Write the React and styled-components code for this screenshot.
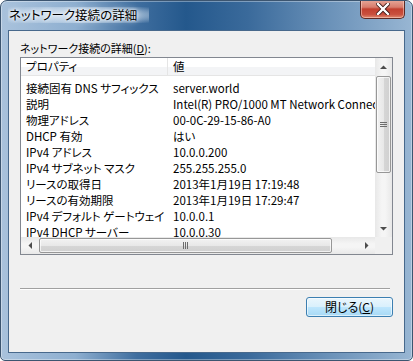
import styled, { createGlobalStyle } from 'styled-components';

const GlobalStyle = createGlobalStyle`
	html, body {
		margin: 0;
		padding: 0;
		background: #fff;
	}
	body {
		font-family: 'Noto Sans CJK JP', 'Liberation Sans', sans-serif;
		font-size: 11.5px;
		font-feature-settings: 'palt';
		color: #000;
	}
`;

const rows = [
	['接続固有 DNS サフィックス', 'server.world'],
	['説明', 'Intel(R) PRO/1000 MT Network Connection'],
	['物理アドレス', '00-0C-29-15-86-A0'],
	['DHCP 有効', 'はい'],
	['IPv4 アドレス', '10.0.0.200'],
	['IPv4 サブネット マスク', '255.255.255.0'],
	['リースの取得日', '2013年1月19日 17:19:48'],
	['リースの有効期限', '2013年1月19日 17:29:47'],
	['IPv4 デフォルト ゲートウェイ', '10.0.0.1'],
	['IPv4 DHCP サーバー', '10.0.0.30'],
];

const Arrow = ({ dir }) => {
	const pts = {
		up: '0,4 7,4 3.5,0.5',
		down: '0,0 7,0 3.5,3.5',
		left: '4,0 4,7 0.5,3.5',
		right: '0,0 0,7 3.5,3.5',
	}[dir];
	const vertical = dir === 'up' || dir === 'down';
	return (
		<svg width={vertical ? 7 : 4} height={vertical ? 4 : 7}>
			<polygon points={pts} fill='#4d4d4d' />
		</svg>
	);
};

const App = () => {
	return (
		<>
			<GlobalStyle />
			<Window>
				<TitleBar>
					<Title>ネットワーク接続の詳細</Title>
					<CloseButton>
						<svg width='14' height='12' viewBox='0 0 14 12'>
							<path
								d='M2 1 L12 11 M12 1 L2 11'
								stroke='#3a1410'
								strokeWidth='4'
								strokeLinecap='square'
							/>
							<path
								d='M2 1 L12 11 M12 1 L2 11'
								stroke='#fff'
								strokeWidth='2.4'
								strokeLinecap='square'
							/>
						</svg>
					</CloseButton>
				</TitleBar>
				<Client>
					<Label>
						ネットワーク接続の詳細(<u>D</u>):
					</Label>
					<ListBox>
						<ListArea>
							<Header>
								<HeaderCell $width={147}>プロパティ</HeaderCell>
								<HeaderCell>値</HeaderCell>
							</Header>
							<Rows>
								{rows.map(([name, value]) => (
									<Row key={name}>
										<Cell $width={147}>{name}</Cell>
										<Cell>{value}</Cell>
									</Row>
								))}
							</Rows>
						</ListArea>
						<VScroll>
							<ArrowBox $size={17}>
								<Arrow dir='up' />
							</ArrowBox>
							<VTrack>
								<VThumb>
									<svg width='7' height='7'>
										<path
											d='M0 1.5 H7 M0 3.5 H7 M0 5.5 H7'
											stroke='#6d6d6d'
											strokeWidth='1'
										/>
									</svg>
								</VThumb>
							</VTrack>
							<ArrowBox $size={17}>
								<Arrow dir='down' />
							</ArrowBox>
						</VScroll>
						<HScroll>
							<ArrowBox $size={17}>
								<Arrow dir='left' />
							</ArrowBox>
							<HTrack>
								<HThumb>
									<svg width='7' height='7'>
										<path
											d='M1.5 0 V7 M3.5 0 V7 M5.5 0 V7'
											stroke='#6d6d6d'
											strokeWidth='1'
										/>
									</svg>
								</HThumb>
							</HTrack>
							<ArrowBox $size={17}>
								<Arrow dir='right' />
							</ArrowBox>
						</HScroll>
						<Corner />
					</ListBox>
					<Separator />
					<ButtonRow>
						<Button>
							閉じる(<u>C</u>)
						</Button>
					</ButtonRow>
				</Client>
			</Window>
		</>
	);
};

const Window = styled.div`
	width: 413px;
	height: 361px;
	box-sizing: border-box;
	border: 1px solid #3c5570;
	border-radius: 7px 7px 5px 5px;
	background: linear-gradient(
		to right,
		#a9c2dc 0%,
		#8eafd0 18%,
		#3f6e9f 33%,
		#24588c 45%,
		#3a6a9b 60%,
		#6b92b9 80%,
		#98b6d3 100%
	);
	display: flex;
	flex-direction: column;
	overflow: hidden;
	box-shadow: inset 0 0 0 1px rgba(255, 255, 255, 0.35);
`;

const TitleBar = styled.div`
	height: 29px;
	flex-shrink: 0;
	display: flex;
	align-items: flex-start;
	justify-content: space-between;
	padding: 0 7px 0 7px;
`;

const Title = styled.div`
	margin-top: 6px;
	padding: 0 12px 0 1px;
	line-height: 16px;
	font-size: 12.5px;
	color: #000;
	background: radial-gradient(
		ellipse at center,
		rgba(230, 238, 246, 0.85) 0%,
		rgba(210, 225, 240, 0.6) 60%,
		rgba(210, 225, 240, 0) 100%
	);
	text-shadow: 0 0 6px #fff, 0 0 3px #fff;
`;

const CloseButton = styled.div`
	width: 45px;
	height: 19px;
	margin-top: -1px;
	box-sizing: border-box;
	border: 1px solid #5e2a24;
	border-top: none;
	border-radius: 0 0 5px 5px;
	background: linear-gradient(
		to bottom,
		#e7a899 0%,
		#d87c6c 40%,
		#c2402f 50%,
		#c9503e 80%,
		#e08a70 100%
	);
	box-shadow: inset 0 0 0 1px rgba(255, 220, 210, 0.5);
	display: flex;
	align-items: center;
	justify-content: center;
`;

const Client = styled.div`
	flex: 1;
	margin: 0 7px 7px 7px;
	border: 1px solid #48698c;
	background: #f0f0f0;
	display: flex;
	flex-direction: column;
	padding: 9px 11px 0 11px;
`;

const Label = styled.div`
	line-height: 16px;
	height: 16px;
	margin-bottom: 1px;
	font-size: 11px;
`;

const ListBox = styled.div`
	height: 198px;
	box-sizing: border-box;
	border: 1px solid #828790;
	background: #fff;
	display: grid;
	grid-template-columns: 1fr 17px;
	grid-template-rows: 1fr 17px;
	overflow: hidden;
`;

const ListArea = styled.div`
	overflow: hidden;
	display: flex;
	flex-direction: column;
`;

const Header = styled.div`
	height: 17px;
	flex-shrink: 0;
	display: flex;
	border-bottom: 1px solid #e5e5e5;
	background: linear-gradient(to bottom, #ffffff 0%, #ffffff 50%, #f3f4f6 51%, #f3f4f6 100%);
`;

const HeaderCell = styled.div`
	width: ${(p) => (p.$width ? `${p.$width}px` : 'auto')};
	flex: ${(p) => (p.$width ? 'none' : '1')};
	box-sizing: border-box;
	padding-left: 5px;
	line-height: 17px;
	white-space: nowrap;
	border-right: ${(p) => (p.$width ? '1px solid #e5e5e5' : 'none')};
`;

const Rows = styled.div`
	padding-top: 4px;
`;

const Row = styled.div`
	display: flex;
	height: 16px;
	line-height: 16px;
`;

const Cell = styled.div`
	width: ${(p) => (p.$width ? `${p.$width}px` : 'auto')};
	flex: ${(p) => (p.$width ? 'none' : '1')};
	box-sizing: border-box;
	padding-left: 5px;
	white-space: nowrap;
	overflow: hidden;
`;

const VScroll = styled.div`
	display: flex;
	flex-direction: column;
	background: linear-gradient(to right, #e8e8e8, #f5f5f5 40%, #f5f5f5 60%, #e8e8e8);
`;

const HScroll = styled.div`
	display: flex;
	background: linear-gradient(to bottom, #e8e8e8, #f5f5f5 40%, #f5f5f5 60%, #e8e8e8);
`;

const ArrowBox = styled.div`
	width: ${(p) => p.$size}px;
	height: ${(p) => p.$size}px;
	flex-shrink: 0;
	display: flex;
	align-items: center;
	justify-content: center;
`;

const VTrack = styled.div`
	flex: 1;
	padding: 1px 1px;
	display: flex;
	flex-direction: column;
`;

const VThumb = styled.div`
	height: 97px;
	box-sizing: border-box;
	border: 1px solid #979797;
	border-radius: 2px;
	background: linear-gradient(to right, #f2f2f2 0%, #e8e8e8 50%, #d6d6d6 51%, #d0d0d0 100%);
	box-shadow: inset 0 0 0 1px rgba(255, 255, 255, 0.7);
	display: flex;
	align-items: center;
	justify-content: center;
`;

const HTrack = styled.div`
	flex: 1;
	padding: 1px 1px;
	display: flex;
`;

const HThumb = styled.div`
	width: 293px;
	box-sizing: border-box;
	border: 1px solid #979797;
	border-radius: 2px;
	background: linear-gradient(to bottom, #f2f2f2 0%, #e8e8e8 50%, #d6d6d6 51%, #d0d0d0 100%);
	box-shadow: inset 0 0 0 1px rgba(255, 255, 255, 0.7);
	display: flex;
	align-items: center;
	justify-content: center;
`;

const Corner = styled.div`
	background: #f0f0f0;
`;

const Separator = styled.div`
	margin: 33px 3px 0 0;
	height: 1px;
	background: #a0a0a0;
	border-bottom: 1px solid #fff;
`;

const ButtonRow = styled.div`
	display: flex;
	justify-content: flex-end;
	margin-top: 7px;
`;

const Button = styled.div`
	width: 87px;
	height: 20px;
	box-sizing: border-box;
	border: 1px solid #3c7fb1;
	border-radius: 3px;
	background: linear-gradient(to bottom, #eaf6fd 0%, #d9f0fc 50%, #bee6fd 51%, #a7d9f5 100%);
	box-shadow: inset 0 0 0 1px rgba(255, 255, 255, 0.6);
	display: flex;
	align-items: center;
	justify-content: center;
	line-height: 16px;
	font-size: 12px;
`;

export default App;
